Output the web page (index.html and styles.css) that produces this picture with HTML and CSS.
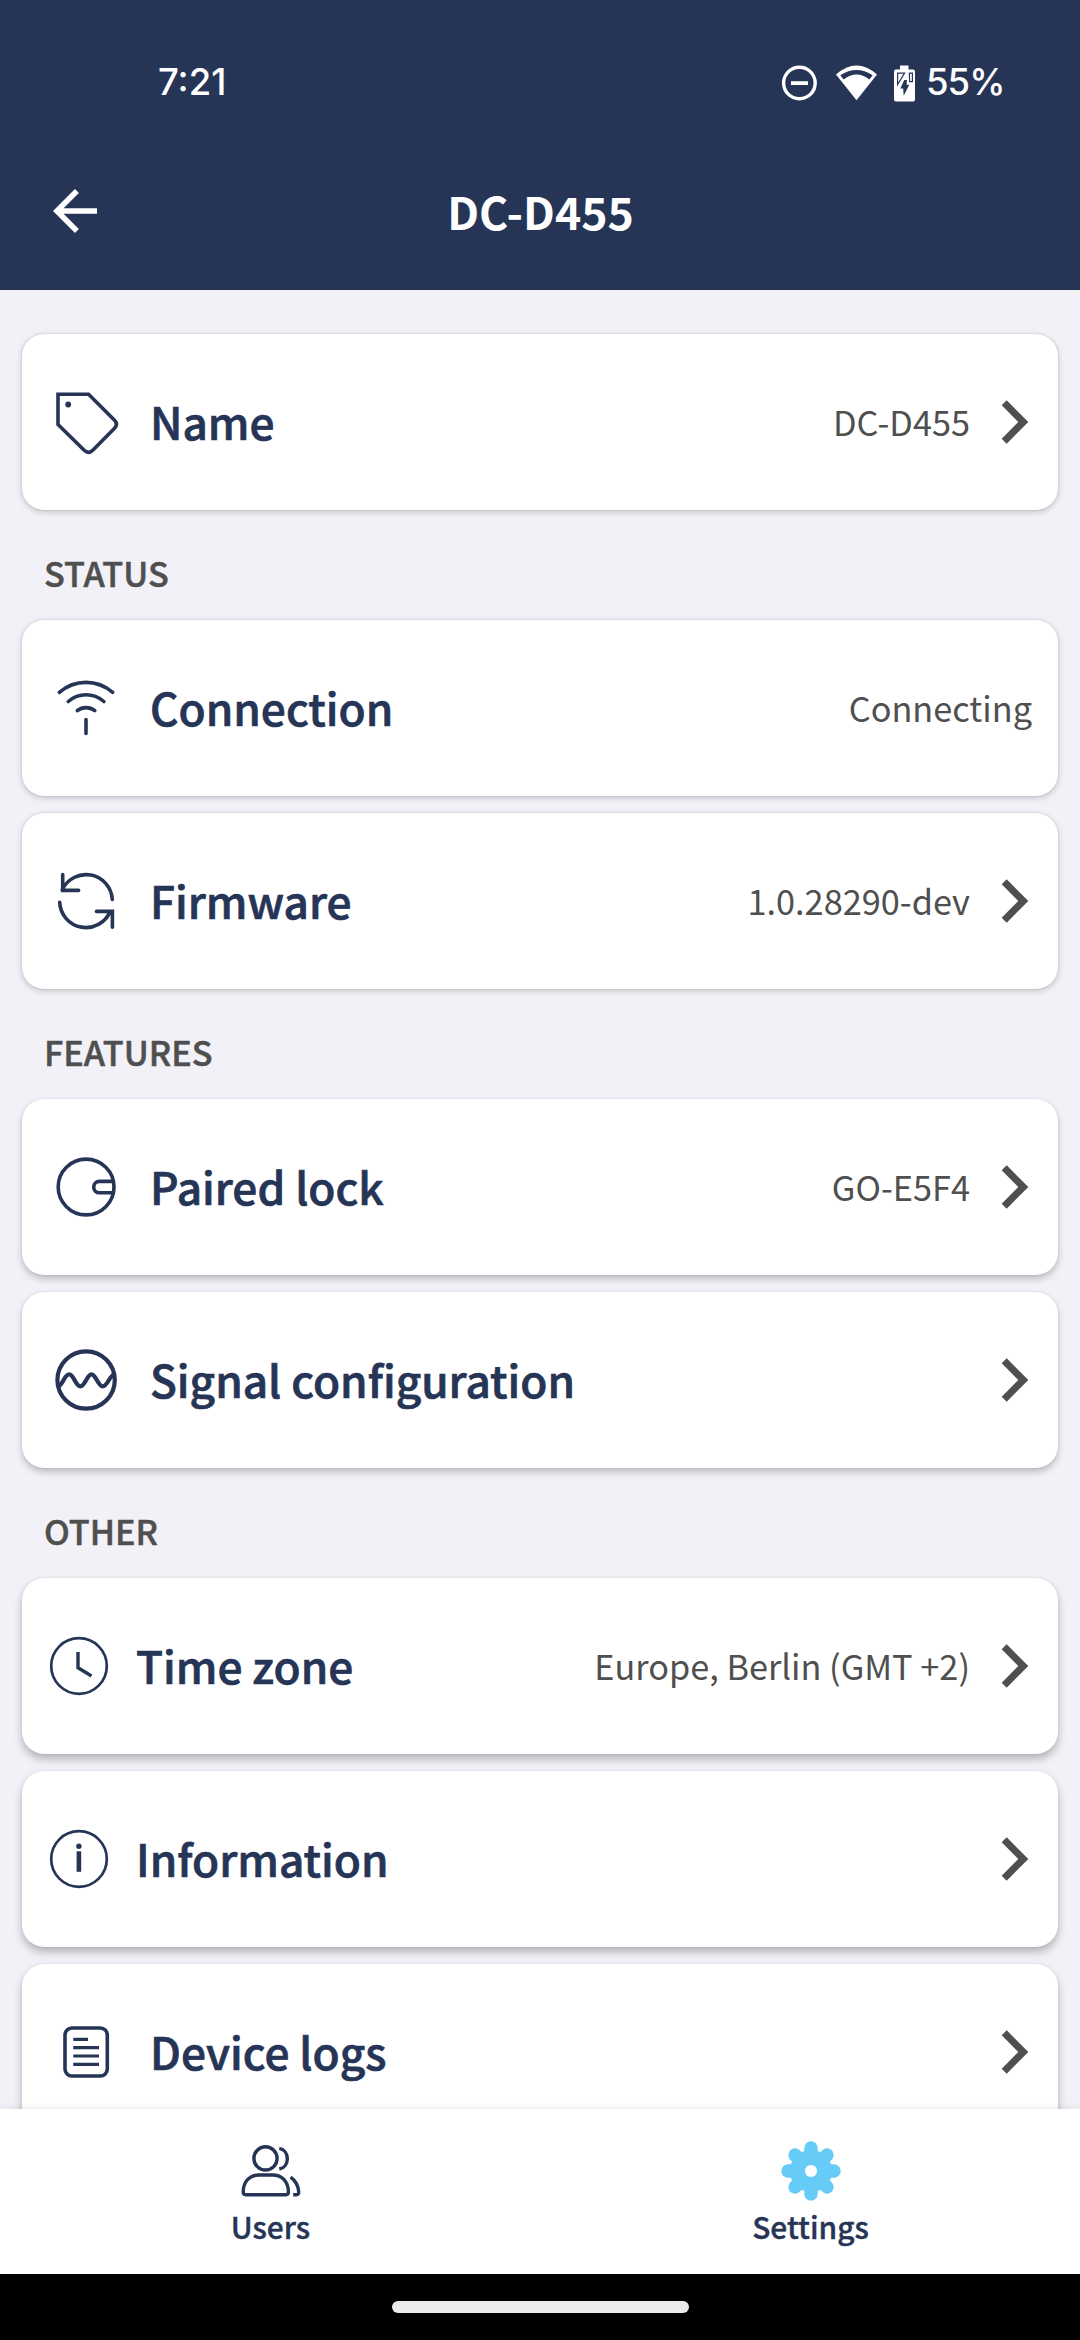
FILE: index.html
```
<!DOCTYPE html>
<html lang="en">
<head>
<meta charset="utf-8">
<title>DC-D455</title>
<link rel="stylesheet" href="styles.css">
</head>
<body>
<svg class="defs" width="0" height="0" aria-hidden="true">
  <symbol id="chevron" viewBox="998 400 34 44"><path d="M1001.7 405.3 1006.7 400.3 1028.3 422 1006.7 443.7 1001.7 438.7 1018.3 422Z" fill="currentColor"/></symbol>
</svg>
<div class="screen">
  <header class="header">
    <div class="status">
      <span class="status__time">7:21</span>
      <div class="status__icons">
        <svg class="status__dnd" width="39" height="40" viewBox="780 62.5 39 40"><circle cx="799.4" cy="82.5" r="15.8" fill="none" stroke="#fff" stroke-width="3.4"/><path d="M791 80.7h17v3.8h-17z" fill="#fff"/></svg>
        <svg class="status__wifi" width="43" height="40" viewBox="835 62.5 43 40"><path d="M836 74Q856.5 56 877 74L856.5 99.7Z" fill="#fff"/><path d="M840.3 74.8Q856.5 64 872.7 74.8L869.3 79Q856.5 69 843.7 79Z" fill="#263456"/></svg>
        <svg class="status__battery" width="23" height="40" viewBox="893 62.5 23 40"><path d="M900 65h8.5v4h4.5a2 2 0 0 1 2 2v28a2 2 0 0 1-2 2h-17a2 2 0 0 1-2-2V71a2 2 0 0 1 2-2h4z" fill="#fff"/><path d="M904.6 72.6h-7v11.400zM909.400 72.600h3v8.600h-2.800z" fill="none" stroke="#263456" stroke-width="1.2"/><path d="M904.300 79.500 900.300 88h2.900l.5 7.200 5.600-11h-2.700l.3-4.700z" fill="#263456"/></svg>
        <span class="status__level">55%</span>
      </div>
    </div>
    <div class="appbar">
      <svg class="appbar__back" width="66" height="66" viewBox="0 0 24 24"><path d="M20 11H7.83l5.59-5.59L12 4l-8 8 8 8 1.41-1.41L7.83 13H20v-2z" fill="#fff"/></svg>
      <h1 class="appbar__title">DC-D455</h1>
    </div>
  </header>

  <main class="content">
    <div class="card card--low">
      <svg class="icon" viewBox="50 386 72 72"><path d="M58 394.2H88.6L114.3 419.9Q118.6 424.2 114.3 428.5L92.8 450.3Q88.6 454.4 84.2 450.3L58 424.5Z"/><circle class="solid" cx="68.2" cy="404.5" r="2.9"/></svg>
      <span class="card__label">Name</span>
      <span class="card__value">DC-D455</span>
      <svg class="chevron"><use href="#chevron"/></svg>
    </div>

    <h2 class="heading">STATUS</h2>
    <div class="card card--low">
      <svg class="icon" viewBox="50 672 72 72"><path d="M59.3 692.4Q71 682.4 86 682.4T112.7 692.4M68.3 701.5Q76 694.8 86 694.8T103.9 701.5M77.3 710.6Q81 707.6 86 707.6T94.8 710.6M86 719.6V733.4"/></svg>
      <span class="card__label">Connection</span>
      <span class="card__value">Connecting</span>
    </div>
    <div class="card card--low">
      <svg class="icon" viewBox="50 865 72 72"><path d="M62.2 889.8A26.3 26.3 0 0 1 112.3 899.5M62.7 874.6V890.4H78.6M59.7 902.4A26.3 26.3 0 0 0 110.2 911.5M96.5 911.4H112.4V927.3"/></svg>
      <span class="card__label">Firmware</span>
      <span class="card__value">1.0.28290-dev</span>
      <svg class="chevron"><use href="#chevron"/></svg>
    </div>

    <h2 class="heading">FEATURES</h2>
    <div class="card card--mid">
      <svg class="icon" viewBox="50 1151 72 72"><circle cx="86.1" cy="1187" r="27.9"/><path d="M113 1181.4H99.4a5.7 5.7 0 0 0 0 11.4H113"/></svg>
      <span class="card__label">Paired lock</span>
      <span class="card__value">GO-E5F4</span>
      <svg class="chevron"><use href="#chevron"/></svg>
    </div>
    <div class="card card--mid">
      <svg class="icon icon--bold" viewBox="50 1344 72 72"><circle cx="86.1" cy="1380" r="28.7"/><path d="M58.8 1386C63.5 1383.5 64.5 1374.3 69.2 1374.3S75.5 1386.3 80.3 1386.3 87 1374.3 91.5 1374.3 98 1386.3 102.7 1386.3 109 1377 113.6 1374.5"/></svg>
      <span class="card__label">Signal configuration</span>
      <svg class="chevron"><use href="#chevron"/></svg>
    </div>

    <h2 class="heading">OTHER</h2>
    <div class="card card--high">
      <svg class="icon icon--compact" viewBox="50 1637 58 58"><circle cx="79" cy="1666" r="27.8"/><path class="hands" d="M78 1652V1667.8L91.5 1676"/></svg>
      <span class="card__label">Time zone</span>
      <span class="card__value">Europe, Berlin (GMT +2)</span>
      <svg class="chevron"><use href="#chevron"/></svg>
    </div>
    <div class="card card--high">
      <svg class="icon icon--compact" viewBox="50 1830 58 58"><circle cx="79" cy="1859" r="27.8"/><path class="solid" d="M76.6 1851.3h4.6v20.5h-4.6z"/><circle class="solid" cx="78.9" cy="1846.2" r="2.7"/></svg>
      <span class="card__label">Information</span>
      <svg class="chevron"><use href="#chevron"/></svg>
    </div>
    <div class="card card--high">
      <svg class="icon" viewBox="50 2016 72 72"><rect x="65" y="2028" width="42.3" height="48" rx="7"/><path class="lines" d="M73.3 2039.3H88M73.3 2047.7H99M73.3 2056H99M73.3 2064.3H99"/></svg>
      <span class="card__label">Device logs</span>
      <svg class="chevron"><use href="#chevron"/></svg>
    </div>
  </main>

  <nav class="tabs">
    <a class="tab">
      <svg class="tab__icon" width="64" height="60" viewBox="239 2141 64 60"><g fill="none" stroke="#263456" stroke-width="3.4"><circle cx="265.5" cy="2158.4" r="11.6"/><path d="M258.5 2175h14.3c9.2 0 15.6 6.8 15.6 17q0 2.7-2.5 2.7h-40.2q-2.5 0-2.5-2.7c0-10.2 6.4-17 15.3-17z"/><path d="M279.3 2148.3C290 2150.5 290 2166.8 279.3 2169M290.6 2177.2C295.8 2181 298.4 2186.5 298.7 2192Q298.8 2194.7 296.5 2194.7H293.2"/></g></svg>
      <span class="tab__label">Users</span>
    </a>
    <a class="tab">
      <svg class="tab__icon" width="64" height="60" viewBox="779 2141 64 60"><g stroke="#67cbf8" stroke-width="13.4" stroke-linecap="round"><path d="M811 2148V2194M788 2171H834M795 2155 827 2187M827 2155 795 2187"/></g><circle cx="811" cy="2171" r="21.2" fill="#67cbf8"/><circle cx="811" cy="2171" r="6.1" fill="#fff"/></svg>
      <span class="tab__label">Settings</span>
    </a>
  </nav>
  <div class="gesture"><div class="gesture__pill"></div></div>
</div>
</body>
</html>
```
FILE: styles.css
```
* { box-sizing: border-box; }

body {
  margin: 0;
  font-family: "Noto Sans CJK SC", "Noto Sans", sans-serif;
  background: #000;
}

svg { display: block; flex: none; overflow: visible; }
.defs { display: none; }

.screen {
  display: flex;
  flex-direction: column;
  width: 1080px;
  height: 2340px;
  overflow: hidden;
}

/* Header */
.header { flex: none; height: 290px; background: #263456; color: #fff; }

.status {
  display: flex;
  align-items: center;
  justify-content: space-between;
  height: 132px;
  padding: 33px 78px 0 158px;
  font-family: Inter, sans-serif;
  font-size: 36.5px;
  font-weight: 500;
  line-height: 99px;
}
.status__icons { display: flex; align-items: center; }
.status__wifi { margin-left: 16px; }
.status__battery { margin-left: 15px; }
.status__level { width: 76px; margin-left: 10px; letter-spacing: -1px; white-space: nowrap; }

.appbar {
  display: grid;
  grid-template-columns: 66px 1fr 66px;
  align-items: center;
  height: 158px;
  padding: 0 42px;
}
.appbar__title { margin: 0; padding-left: 1px; text-align: center; font-size: 44.6px; font-weight: 700; line-height: 66px; }

/* Settings list */
.content {
  flex: 1;
  min-height: 0;
  display: flex;
  flex-direction: column;
  padding: 44px 22px 0;
  background: #f2f1f7;
  overflow: hidden;
}

.card {
  flex: none;
  display: flex;
  align-items: center;
  height: 176px;
  padding: 0 26px 0 28px;
  border-radius: 22px;
  background: #fff;
}
.card + .card { margin-top: 17px; }
.card--low { box-shadow: 0 2px 6px rgba(0, 0, 0, .2), 0 0 2px rgba(0, 0, 0, .14); }
.card--mid { box-shadow: 0 4px 7px rgba(0, 0, 0, .22), 0 0 2px rgba(0, 0, 0, .12); }
.card--high { box-shadow: 0 5px 9px rgba(0, 0, 0, .26), 0 0 2px rgba(0, 0, 0, .1); }

.card__label {
  margin-left: 28px;
  padding-bottom: 3px;
  font-size: 44.2px;
  font-weight: 500;
  line-height: 66px;
  color: #263456;
  white-space: nowrap;
  -webkit-text-stroke: 0.7px #263456;
}
.card__value {
  margin-left: auto;
  padding-bottom: 3px;
  font-size: 34.3px;
  line-height: 50px;
  color: #4f4f4f;
  white-space: nowrap;
}
.chevron { width: 34px; height: 44px; margin-left: auto; color: #4f4f4f; }
.card__value + .chevron { margin-left: 28px; }

.icon {
  width: 72px;
  height: 72px;
  fill: none;
  stroke: #263456;
  stroke-width: 3.6;
  stroke-linecap: round;
}
.icon--bold { stroke-width: 4.2; }
.icon--compact { width: 58px; height: 58px; stroke-width: 2.7; }
.icon .solid { fill: #263456; stroke: none; }
.icon .hands { stroke-width: 3.4; stroke-linecap: butt; }
.icon .lines { stroke-width: 3.2; stroke-linecap: butt; }

.heading {
  flex: none;
  height: 110px;
  margin: 0;
  padding: 13px 22px 0;
  font-size: 34.2px;
  font-weight: 500;
  line-height: 98px;
  color: #4f4f4f;
  -webkit-text-stroke: 0.5px #4f4f4f;
}

/* Bottom navigation */
.tabs {
  position: relative;
  flex: none;
  display: grid;
  grid-template-columns: 1fr 1fr;
  height: 165px;
  background: #fff;
  box-shadow: 0 -1px 8px rgba(0, 0, 0, .08);
}
.tab { display: flex; flex-direction: column; align-items: center; padding-top: 32px; }
.tab__icon { margin-left: 2px; }
.tab__label {
  margin-top: 5px;
  padding-left: 1px;
  font-size: 29.9px;
  font-weight: 500;
  line-height: 40px;
  color: #263456;
  -webkit-text-stroke: 0.4px #263456;
}

.gesture { flex: none; display: flex; justify-content: center; height: 66px; padding-top: 27px; background: #000; }
.gesture__pill { width: 297px; height: 12px; border-radius: 6px; background: #ebebeb; }
```
